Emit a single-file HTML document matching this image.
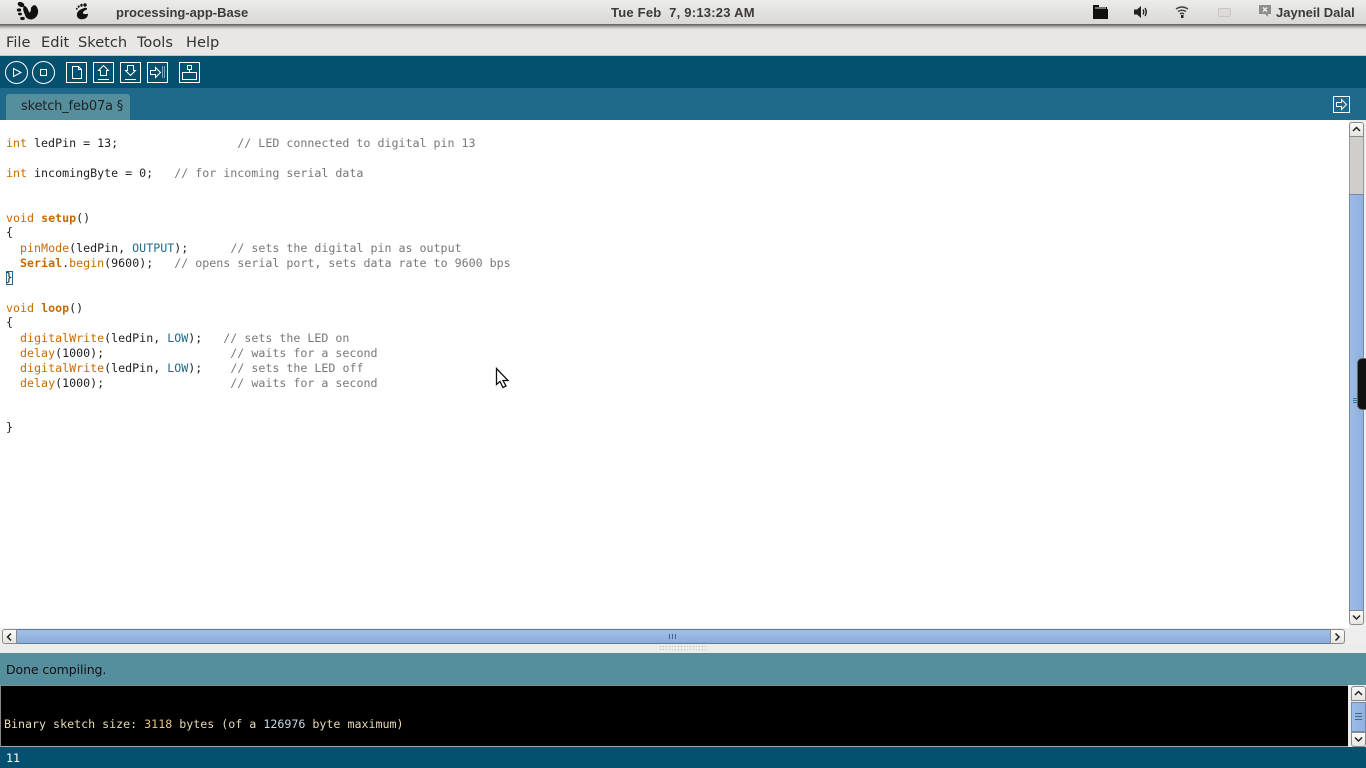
<!DOCTYPE html>
<html>
<head>
<meta charset="utf-8">
<title>processing-app-Base</title>
<style>
html,body{margin:0;padding:0;width:1366px;height:768px;overflow:hidden;background:#eee;font-family:"Liberation Sans",sans-serif}
.a{position:absolute}
#panel{left:0;top:0;width:1366px;height:24px;background:linear-gradient(#ececea,#d9d8d5)}
#pshadow{left:0;top:24px;width:1366px;height:6px;background:linear-gradient(#5c5a55,#8f8d88 30%,#d0cfcb 65%,#e8e7e5);z-index:2}
.pt{font:bold 13px "Liberation Sans",sans-serif;color:#3c3b37;white-space:pre;top:5px;line-height:16px}
#menu{left:0;top:26px;width:1366px;height:29px;background:#e8e7e5;border-bottom:1px solid #c8c6c2;box-sizing:content-box}
.m{top:34px;font:14.6px/18px "DejaVu Sans",sans-serif;color:#333;white-space:pre}
#tb{left:0;top:56px;width:1366px;height:32px;background:#04506f}
#tabs{left:0;top:88px;width:1366px;height:32px;background:#1f6a8a}
#tab{left:6px;top:94px;width:124px;height:26px;background:#558f9e;border-radius:3px 3px 0 0}
#tabt{left:21px;top:99px;font:13px/16px "DejaVu Sans",sans-serif;color:#222;white-space:pre;letter-spacing:-.18px}
#ed{left:0;top:120px;width:1349px;height:508px;background:#fff}
.c{position:absolute;left:6px;font:11.65px/15px "DejaVu Sans Mono","Liberation Mono",monospace;color:#222;white-space:pre;margin:0}
.k{color:#c96a00}.b{font-weight:bold;color:#c96a00}.g{color:#777}.t{color:#1f6a8a}
#done{left:6px;top:661px;font:12.5px/16px "DejaVu Sans",sans-serif;color:#111;letter-spacing:-.1px;white-space:pre}
#status{left:0;top:653px;width:1366px;height:32px;background:#558f9e}
#con{left:0;top:685px;width:1348px;height:62px;background:#000;border-top:1px solid #8a8a88;border-bottom:1px solid #aaa;box-sizing:border-box;border-left:1px solid #888}
#cont{left:4px;top:717px;font:11.65px/15px "DejaVu Sans Mono","Liberation Mono",monospace;color:#e8d9b4;white-space:pre}
#foot{left:0;top:747px;width:1366px;height:21px;background:#04506f}
#foott{left:6px;top:751px;font:11.65px/15px "DejaVu Sans Mono",monospace;color:#fff}
.btn{background:linear-gradient(#fbfbfa,#e4e3e1);border:1px solid #8b8a87;box-sizing:border-box}
.thumb{background:linear-gradient(90deg,#9dbbe6,#8fb0de);border:1px solid #6f8caf;box-sizing:border-box}
</style>
</head>
<body>
<div class="a" id="panel"></div>
<div class="a" id="pshadow"></div>
<svg class="a" style="left:15px;top:1px" width="26" height="22" viewBox="0 0 26 22"><g fill="#111"><ellipse cx="6" cy="3.5" rx="3.5" ry="2.4" transform="rotate(25 6 3.5)"/><ellipse cx="4" cy="9" rx="2.2" ry="1.6"/><ellipse cx="5" cy="13" rx="2" ry="1.4"/><ellipse cx="7.5" cy="17.5" rx="2.3" ry="1.6"/><path d="M9 5C12 5 13 9 14 11C15 12.5 16 10 16 7C17 5 20 3 21 5C24 8 24 14 20 17C16 20 11 18 10 14C9 11 7 8 9 5Z"/></g></svg>
<svg class="a" style="left:74px;top:3px" width="16" height="18" viewBox="0 0 16 18"><g fill="#111"><ellipse cx="11" cy="2" rx="1.7" ry="1.7"/><ellipse cx="7.5" cy="2.3" rx="1.2" ry="1.5"/><ellipse cx="4.7" cy="3.6" rx="1" ry="1.2"/><ellipse cx="2.8" cy="5.8" rx=".9" ry="1"/><path d="M10 5C13 4 14 6 12 7C9 8 8 10 10 11C12 11.500 13 10.500 14 11C14 15 10 17 6 16C2 15 2 10 5 7.500C7 6 8 6 10 5Z"/></g></svg>
<div class="a pt" style="left:116px">processing-app-Base</div>
<div class="a pt" style="left:611px;letter-spacing:.23px">Tue Feb  7, 9:13:23 AM</div>
<svg class="a" style="left:1092px;top:4px" width="17" height="16" viewBox="0 0 17 16"><path d="M1 1H7V3H15V5H16V15H1Z" fill="#111"/><path d="M3 4H14" stroke="#ddd" stroke-width="1"/></svg>
<svg class="a" style="left:1133px;top:5px" width="16" height="14" viewBox="0 0 16 14"><path d="M1 4.500H4L8 1V13L4 9.500H1Z" fill="#222"/><path d="M10 4.500Q11.500 7 10 9.500M12 3Q14.500 7 12 11" fill="none" stroke="#222" stroke-width="1.400"/></svg>
<svg class="a" style="left:1175px;top:5px" width="14" height="14" viewBox="0 0 14 14"><path d="M1 4Q7 0 13 4M3 6.500Q7 4 11 6.500M5 9Q7 7.500 9 9" fill="none" stroke="#444" stroke-width="1.500"/><rect x="6" y="10" width="2.500" height="3" fill="#222"/></svg>
<div class="a" style="left:1218px;top:8px;width:11px;height:7px;background:#dcdbd7;border:1px solid #c8c7c3;border-radius:2px"></div>
<svg class="a" style="left:1258px;top:4px" width="14" height="15" viewBox="0 0 14 15"><path d="M1 1H13V10H10V13L7 10H1Z" fill="#8e8d89"/><path d="M5 3.500L9 7.500M9 3.500L5 7.500" stroke="#eee" stroke-width="1.500"/></svg>
<div class="a pt" style="left:1276px">Jayneil Dalal</div>

<div class="a" id="menu"></div>
<div class="a m" style="left:6px">File</div>
<div class="a m" style="left:41px">Edit</div>
<div class="a m" style="left:78px">Sketch</div>
<div class="a m" style="left:137px">Tools</div>
<div class="a m" style="left:186px">Help</div>

<div class="a" id="tb"></div>
<svg class="a" style="left:0;top:56px" width="210" height="32" viewBox="0 0 210 32" fill="none" stroke="#fff" stroke-width="1" shape-rendering="crispEdges">
<g shape-rendering="auto"><circle cx="16.500" cy="16.500" r="11"/><circle cx="43.500" cy="16.500" r="11"/><path d="M13.500 12.500L21 16.500L13.500 20.500Z"/></g>
<rect x="40.500" y="13.500" width="6" height="6"/>
<rect x="66.500" y="6.500" width="20" height="20"/><path d="M72.500 10.500H78.500L81.500 13.500V22.500H72.500ZM78.500 10.500V13.500H81.500"/>
<rect x="93.500" y="6.500" width="20" height="20"/><path d="M103.500 9.500L108.500 14.500H106.500V19.500H100.500V14.500H98.500ZM98 23.500H109"/>
<rect x="120.500" y="6.500" width="20" height="20"/><path d="M127.500 9.500H133.500V14.500H135.500L130.500 19.500L125.500 14.500H127.500ZM125 23.500H136"/>
<rect x="147.500" y="6.500" width="20" height="20"/><path d="M150.500 14.500H155.500V11.500L160.500 16.500L155.500 21.500V18.500H150.500Z"/><path d="M162.500 10.500V22.500M164.500 10.500V22.500" stroke-dasharray="1 1"/>
<rect x="179.500" y="6.500" width="20" height="20"/><path d="M182.500 16.500H196.500V23.500H182.500ZM189.500 13V16" fill="#04506f"/><rect x="187.500" y="9.500" width="4" height="4"/>
</svg>

<div class="a" id="tabs"></div>
<div class="a" id="tab"></div>
<div class="a" id="tabt">sketch_feb07a §</div>
<svg class="a" style="left:1333px;top:96px" width="18" height="18" viewBox="0 0 18 18" fill="none" stroke="#fff" shape-rendering="crispEdges"><rect x=".5" y=".5" width="16" height="16"/><path d="M3.500 6.500H8.500V3.500L13.500 8.500L8.500 13.500V10.500H3.500Z" shape-rendering="auto"/></svg>

<div class="a" id="ed"></div>
<pre class="c" style="top:136px"><span class="k">int</span> ledPin = 13;                 <span class="g">// LED connected to digital pin 13</span></pre>
<pre class="c" style="top:166px"><span class="k">int</span> incomingByte = 0;   <span class="g">// for incoming serial data</span></pre>
<pre class="c" style="top:211px"><span class="k">void</span> <span class="b">setup</span>()</pre>
<pre class="c" style="top:225px">{</pre>
<pre class="c" style="top:241px">  <span class="k">pinMode</span>(ledPin, <span class="t">OUTPUT</span>);      <span class="g">// sets the digital pin as output</span></pre>
<pre class="c" style="top:256px">  <span class="b">Serial</span>.<span class="k">begin</span>(9600);   <span class="g">// opens serial port, sets data rate to 9600 bps</span></pre>
<div class="a" style="left:6px;top:271px;width:5px;height:12px;border:1px solid #1f6a8a;background:#f4f8fa"></div>
<pre class="c" style="top:270px;left:5.500px">}</pre>
<pre class="c" style="top:301px"><span class="k">void</span> <span class="b">loop</span>()</pre>
<pre class="c" style="top:315px">{</pre>
<pre class="c" style="top:331px">  <span class="k">digitalWrite</span>(ledPin, <span class="t">LOW</span>);   <span class="g">// sets the LED on</span></pre>
<pre class="c" style="top:346px">  <span class="k">delay</span>(1000);                  <span class="g">// waits for a second</span></pre>
<pre class="c" style="top:361px">  <span class="k">digitalWrite</span>(ledPin, <span class="t">LOW</span>);    <span class="g">// sets the LED off</span></pre>
<pre class="c" style="top:376px">  <span class="k">delay</span>(1000);                  <span class="g">// waits for a second</span></pre>
<pre class="c" style="top:420px">}</pre>

<svg class="a" style="left:494px;top:367px" width="16" height="23" viewBox="0 0 16 23"><path d="M2.500 1.500V17.500L6 14.500L9 20.500L12 19L9 13.500H14Z" fill="#fff" stroke="#111" stroke-width="1.300"/></svg>

<!-- vertical scrollbar -->
<div class="a" style="left:1349px;top:120px;width:17px;height:508px;background:#eeeeec"></div>
<div class="a" style="left:1349px;top:135px;width:15px;height:478px;background:#cfcecc;border:1px solid #999;box-sizing:border-box;border-radius:2px"></div>
<div class="a thumb" style="left:1349px;top:194px;width:15px;height:418px"></div>
<div class="a btn" style="left:1349px;top:122px;width:15px;height:15px;border-radius:3px 3px 0 0"></div>
<svg class="a" style="left:1352px;top:125px" width="10" height="9"><path d="M1 6L4.500 2.500L8 6" fill="none" stroke="#222" stroke-width="1.500"/></svg>
<div class="a btn" style="left:1349px;top:610px;width:15px;height:15px;border-radius:0 0 3px 3px"></div>
<svg class="a" style="left:1352px;top:613px" width="10" height="9"><path d="M1 2.500L4.500 6L8 2.500" fill="none" stroke="#222" stroke-width="1.500"/></svg>
<div class="a" style="left:1357px;top:358px;width:9px;height:52px;background:#111;border:1px solid #666;border-right:0;border-radius:5px 0 0 5px;box-sizing:border-box"></div>
<div class="a" style="left:1353px;top:398px;width:4px;height:5px;background:repeating-linear-gradient(#2a7f9f 0 1px,transparent 1px 2px)"></div>

<!-- horizontal scrollbar -->
<div class="a" style="left:0;top:628px;width:1349px;height:16px;background:#eeeeec"></div>
<div class="a" style="left:15px;top:629px;width:1316px;height:15px;background:linear-gradient(#a3bfe6,#8aabdb);border:1px solid #5f7c9f;box-sizing:border-box"></div>
<div class="a btn" style="left:2px;top:629px;width:15px;height:15px;border-radius:3px 0 0 3px"></div>
<svg class="a" style="left:5px;top:632px" width="9" height="10"><path d="M6 1.500L2.500 5L6 8.500" fill="none" stroke="#222" stroke-width="1.500"/></svg>
<div class="a btn" style="left:1330px;top:629px;width:15px;height:15px;border-radius:0 3px 3px 0"></div>
<svg class="a" style="left:1333px;top:632px" width="9" height="10"><path d="M2.500 1.500L6 5L2.500 8.500" fill="none" stroke="#222" stroke-width="1.500"/></svg>
<div class="a" style="left:669px;top:634px;width:7px;height:5px;background:repeating-linear-gradient(90deg,#3f6a8a 0 1px,transparent 1px 3px)"></div>

<div class="a" style="left:0;top:644px;width:1366px;height:9px;background:#ececea"></div>
<div class="a" style="left:660px;top:646px;width:47px;height:5px;background:repeating-linear-gradient(90deg,#bbb 0 1px,transparent 1px 3px);-webkit-mask:repeating-linear-gradient(#000 0 1px,transparent 1px 3px)"></div>

<div class="a" id="status"></div>
<div class="a" id="done" style="top:662px">Done compiling.</div>
<div class="a" id="con"></div>
<div class="a" id="cont">Binary sketch size: <span style="color:#e8c080">3118</span> bytes (of a <span style="color:#c8d8e8">126976</span> byte maximum)</div>

<!-- console scrollbar -->
<div class="a" style="left:1348px;top:685px;width:18px;height:62px;background:#eeeeec"></div>
<div class="a btn" style="left:1351px;top:686px;width:15px;height:15px;border-radius:3px 3px 0 0"></div>
<svg class="a" style="left:1354px;top:689px" width="10" height="9"><path d="M1 6L4.500 2.500L8 6" fill="none" stroke="#222" stroke-width="1.500"/></svg>
<div class="a thumb" style="left:1351px;top:702px;width:15px;height:30px"></div>
<div class="a" style="left:1355px;top:713px;width:7px;height:9px;background:repeating-linear-gradient(#3f6a8a 0 1px,transparent 1px 3px)"></div>
<div class="a btn" style="left:1351px;top:732px;width:15px;height:15px;border-radius:0 0 3px 3px"></div>
<svg class="a" style="left:1354px;top:735px" width="10" height="9"><path d="M1 2.500L4.500 6L8 2.500" fill="none" stroke="#222" stroke-width="1.500"/></svg>

<div class="a" id="foot"></div>
<div class="a" id="foott">11</div>
</body>
</html>
